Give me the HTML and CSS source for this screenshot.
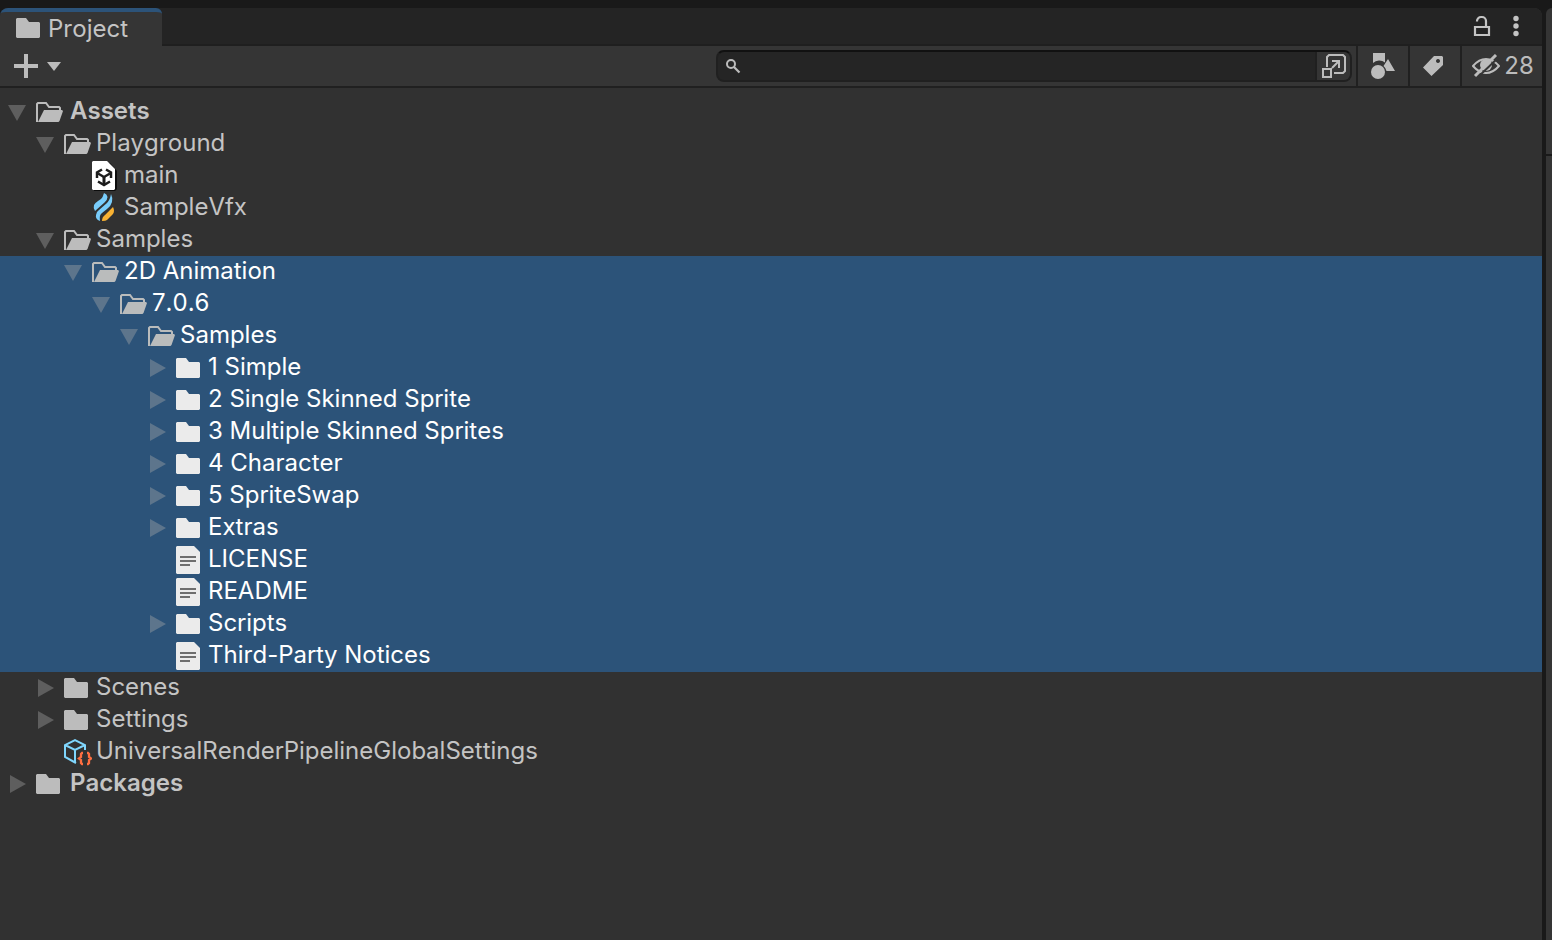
FILE: index.html
```html
<!DOCTYPE html>
<html lang="en">
<head>
<meta charset="utf-8">
<title>Project</title>
<link rel="stylesheet" href="styles.css">
</head>
<body>
<svg class="defs" aria-hidden="true">
  <symbol id="down" viewBox="0 0 28 32"><path d="M0 9h18L9 25z"/></symbol>
  <symbol id="right" viewBox="0 0 28 32"><path d="M2 7v18l16-9z"/></symbol>
  <symbol id="folder" viewBox="0 0 28 32"><path d="M1 6h9l3 4h10l1 1v14l-1 1H1l-1-1V7z"/></symbol>
  <symbol id="open" viewBox="0 0 28 32"><path d="M2 25H1V8l1-1h8l3 4h10l1 1v2" fill="none" stroke="currentColor" stroke-width="2"/><path d="M8 14h18l1 1-3.500 10-1 1H2z"/></symbol>
  <symbol id="file" viewBox="0 0 28 32"><path d="M1 2h17l6 6v21l-1 1H1l-1-1V3z"/><path d="M4 13h16M4 17h16M4 21h10" stroke="#6e6e6e" stroke-width="2"/></symbol>
</svg>
<div class="window">
  <section class="panel">
    <header class="tabs">
      <button class="tab"><svg class="icon" viewBox="0 0 28 32"><use href="#folder"/></svg><span>Project</span></button>
      <div class="actions">
        <button aria-label="Lock"><svg width="18" height="22" viewBox="0 0 18 22"><path d="M2 12h14v8H2zM4 6.500V6a4 4 0 0 1 4-4h1a4 4 0 0 1 4 4v6" fill="none" stroke="currentColor" stroke-width="2.200"/></svg></button>
        <button aria-label="Menu"><svg width="8" height="22" viewBox="0 0 8 22"><circle cx="4" cy="3.500" r="2.700"/><circle cx="4" cy="11" r="2.700"/><circle cx="4" cy="18.500" r="2.700"/></svg></button>
      </div>
    </header>
    <div class="toolbar">
      <button class="create" aria-label="Create"><svg width="48" height="24" viewBox="0 0 48 24"><path d="M10 0h4v10h10v4H14v10h-4V14H0v-4h10z"/><path d="M33 8h14l-7 9z"/></svg></button>
      <div class="search">
        <svg width="16" height="16" viewBox="0 0 16 16"><circle cx="6" cy="6" r="4" fill="none" stroke="currentColor" stroke-width="2"/><path d="M9 9l5.500 5.500" stroke="currentColor" stroke-width="2.200"/></svg>
        <input type="text" aria-label="Search">
        <button aria-label="Open in search"><svg width="24" height="24" viewBox="0 0 24 24"><g fill="none" stroke="currentColor" stroke-width="2"><path d="M5 13V3l2-2h14l2 2v14l-2 2H12"/><path d="M1 15h8v8H1z"/><path d="M10 14l7-7M10 7h7v7"/></g></svg></button>
      </div>
      <button class="tool" aria-label="Search by type"><svg width="24" height="28" viewBox="0 0 24 28"><path d="M2 1h12v9.500A9 9 0 0 0 2 11z"/><circle cx="7" cy="20" r="7"/><path d="M17 7l7 12h-8.500a9 9 0 0 0-3-5z"/></svg></button>
      <button class="tool" aria-label="Search by label"><svg width="24" height="20" viewBox="0 0 24 20"><path fill-rule="evenodd" d="M11 0h8l1 1v8L8.500 20 0 11.500zM15 3a2 2 0 1 0 .01 0z"/></svg></button>
      <button class="tool count" aria-label="Hidden packages 28"><svg width="28" height="24" viewBox="0 0 28 24"><path d="M1 12Q7 5 14 5t13 7q-6 7-13 7T1 12z" fill="none" stroke="currentColor" stroke-width="2"/><circle cx="14" cy="11" r="6"/><path d="M5 24L27 3" stroke="#353535" stroke-width="2"/><path d="M3 22L24 1" stroke="currentColor" stroke-width="3"/></svg><span>28</span></button>
    </div>
    <ul class="tree" role="tree" aria-label="Project">
      <li class="row l0"><button class="fold" aria-label="Collapse"><svg class="icon"><use href="#down"/></svg></button><svg class="icon"><use href="#open"/></svg><span>Assets</span></li>
      <li class="row l1"><button class="fold" aria-label="Collapse"><svg class="icon"><use href="#down"/></svg></button><svg class="icon"><use href="#open"/></svg><span>Playground</span></li>
      <li class="row l2"><i class="fold"></i><svg class="icon" viewBox="0 0 28 32"><path d="M1 3h17l7 8v18l-2 2H2z" fill="#0c0c0c"/><path d="M1 1h14l8 8v20l-1 1H1l-1-1V2z" fill="#fff"/><g fill="none" stroke="#1c1c1c" stroke-width="2.500"><path d="M12 17v8" stroke-width="3"/><path d="M12 17l-6-3.500M12 17l6-3.500"/><path d="M5 18v-5.500L10 9.500M14 9.500l5 3v5.500M6 21.500l6 3.500 6-3.500"/></g></svg><span>main</span></li>
      <li class="row l2"><i class="fold"></i><svg class="icon" viewBox="0 0 28 32"><path d="M12 1q3 1 3.500 4 0 3-3 5.500L3 19q-2-3-1-6 1-2 4-4l3-2q2-2 3-6zM19 2q2 4 1 8-1 4-5 7l-5 4q-3 2-2 8-5-2-4-6 0-3 3-5l8-7q3-3 4-9z" fill="#78ccfa"/><path d="M21 15q2 4 0 7l-6 6q-1 1-5 1 0-4 3-6l6-6z" fill="#f9b233"/></svg><span>SampleVfx</span></li>
      <li class="row l1"><button class="fold" aria-label="Collapse"><svg class="icon"><use href="#down"/></svg></button><svg class="icon"><use href="#open"/></svg><span>Samples</span></li>
      <li class="row l2 selected"><button class="fold" aria-label="Collapse"><svg class="icon"><use href="#down"/></svg></button><svg class="icon dim"><use href="#open"/></svg><span>2D Animation</span></li>
      <li class="row l3 selected"><button class="fold" aria-label="Collapse"><svg class="icon"><use href="#down"/></svg></button><svg class="icon dim"><use href="#open"/></svg><span>7.0.6</span></li>
      <li class="row l4 selected"><button class="fold" aria-label="Collapse"><svg class="icon"><use href="#down"/></svg></button><svg class="icon dim"><use href="#open"/></svg><span>Samples</span></li>
      <li class="row l5 selected"><button class="fold" aria-label="Expand"><svg class="icon"><use href="#right"/></svg></button><svg class="icon"><use href="#folder"/></svg><span>1 Simple</span></li>
      <li class="row l5 selected"><button class="fold" aria-label="Expand"><svg class="icon"><use href="#right"/></svg></button><svg class="icon"><use href="#folder"/></svg><span>2 Single Skinned Sprite</span></li>
      <li class="row l5 selected"><button class="fold" aria-label="Expand"><svg class="icon"><use href="#right"/></svg></button><svg class="icon"><use href="#folder"/></svg><span>3 Multiple Skinned Sprites</span></li>
      <li class="row l5 selected"><button class="fold" aria-label="Expand"><svg class="icon"><use href="#right"/></svg></button><svg class="icon"><use href="#folder"/></svg><span>4 Character</span></li>
      <li class="row l5 selected"><button class="fold" aria-label="Expand"><svg class="icon"><use href="#right"/></svg></button><svg class="icon"><use href="#folder"/></svg><span>5 SpriteSwap</span></li>
      <li class="row l5 selected"><button class="fold" aria-label="Expand"><svg class="icon"><use href="#right"/></svg></button><svg class="icon"><use href="#folder"/></svg><span>Extras</span></li>
      <li class="row l5 selected"><i class="fold"></i><svg class="icon"><use href="#file"/></svg><span>LICENSE</span></li>
      <li class="row l5 selected"><i class="fold"></i><svg class="icon"><use href="#file"/></svg><span>README</span></li>
      <li class="row l5 selected"><button class="fold" aria-label="Expand"><svg class="icon"><use href="#right"/></svg></button><svg class="icon"><use href="#folder"/></svg><span>Scripts</span></li>
      <li class="row l5 selected"><i class="fold"></i><svg class="icon"><use href="#file"/></svg><span>Third-Party Notices</span></li>
      <li class="row l1"><button class="fold" aria-label="Expand"><svg class="icon"><use href="#right"/></svg></button><svg class="icon"><use href="#folder"/></svg><span>Scenes</span></li>
      <li class="row l1"><button class="fold" aria-label="Expand"><svg class="icon"><use href="#right"/></svg></button><svg class="icon"><use href="#folder"/></svg><span>Settings</span></li>
      <li class="row l1"><i class="fold"></i><svg class="icon" viewBox="0 0 28 32"><g fill="none" stroke="#7fd6fd" stroke-width="2"><path d="M21 14V9L11 4 1 9v12l11 6M1 9l10 5 10-5M11 14v12"/></g><g fill="none" stroke="#ff6e40" stroke-width="2.300"><path d="M19 18h-1l-1 1v3l-2 1.500 2 1.500v3l1 1h1M23 18h1l1 1v3l2 1.500-2 1.500v3l-1 1h-1" transform="translate(0 -1)"/></g></svg><span>UniversalRenderPipelineGlobalSettings</span></li>
      <li class="row l0"><button class="fold" aria-label="Expand"><svg class="icon"><use href="#right"/></svg></button><svg class="icon"><use href="#folder"/></svg><span>Packages</span></li>
    </ul>
  </section>
  <aside class="neighbor"><div class="neighbor-top"></div><div class="neighbor-body"></div></aside>
</div>
</body>
</html>
```

FILE: styles.css
```css
* { box-sizing: border-box; }
body { margin: 0; background: #191919; color: #c4c4c4; font: 24px/30px Inter, sans-serif; font-kerning: none; }
button { margin: 0; padding: 0; border: 0; background: none; color: inherit; font: inherit; }
svg { display: block; flex: none; fill: currentColor; }
.defs { position: absolute; width: 0; height: 0; }
.window { display: flex; gap: 4px; min-height: 100vh; padding-top: 8px; }
.panel { flex: 1; display: flex; flex-direction: column; min-width: 0; background: #313131; border-radius: 8px 8px 0 0; overflow: hidden; }
.tabs { display: flex; justify-content: space-between; height: 38px; background: #242424; box-shadow: inset 0 -2px #1f1f1f; }
.tab { display: flex; gap: 4px; width: 162px; padding: 0 16px; background: #353535; border-top: 4px solid #2c5379; border-radius: 6px 6px 0 0; }
.tab span { padding-top: 2px; }
.icon { width: 28px; height: 32px; color: #bcbcbc; }
.actions { display: flex; align-items: center; gap: 21px; padding: 0 22px 2px 0; color: #c4c4c4; }
.toolbar { display: flex; align-items: stretch; height: 42px; background: #353535; border-bottom: 2px solid #202020; color: #bcbcbc; }
.create { flex: 1; padding-left: 14px; }
.search { flex: none; display: flex; align-items: center; width: calc(41% + 4px); height: 32px; margin: 4px 4px 0 0; padding-left: 7px; background: #252525; border: 2px solid #202020; border-top-color: #111; border-radius: 8px; overflow: hidden; }
.search input { flex: 1; min-width: 0; height: 28px; padding: 0 8px; border: 0; outline: 0; background: none; color: #c4c4c4; font: inherit; }
.search button { display: grid; place-items: center; width: 35px; height: 28px; background: #353535; border-left: 2px solid #202020; }
.tool { display: flex; align-items: center; justify-content: center; width: 52px; border-left: 2px solid #202020; }
.count { width: 82px; gap: 4px; padding-left: 2px; }
.tree { flex: 1; margin: 0; padding: 8px 0; list-style: none; }
.row { display: flex; height: 32px; white-space: nowrap; }
.row span { padding-left: 4px; }
.fold { width: 28px; height: 32px; }
.fold .icon { color: #5e5e5e; }
.l0 { padding-left: 8px; font-weight: 600; }
.l0 span { padding-left: 6px; }
.l1 { padding-left: 36px; }
.l2 { padding-left: 64px; }
.l3 { padding-left: 92px; }
.l4 { padding-left: 120px; }
.l5 { padding-left: 148px; }
.selected { background: #2c5379; color: #fff; }
.selected .icon { color: #ebebeb; }
.selected .dim { color: #babcbc; }
.selected .fold .icon { color: #5d758c; }
.neighbor { display: flex; flex-direction: column; gap: 2px; width: 6px; }
.neighbor-top { height: 146px; background: #353535; border-radius: 6px 0 0 0; }
.neighbor-body { flex: 1; background: #353535; }
```
